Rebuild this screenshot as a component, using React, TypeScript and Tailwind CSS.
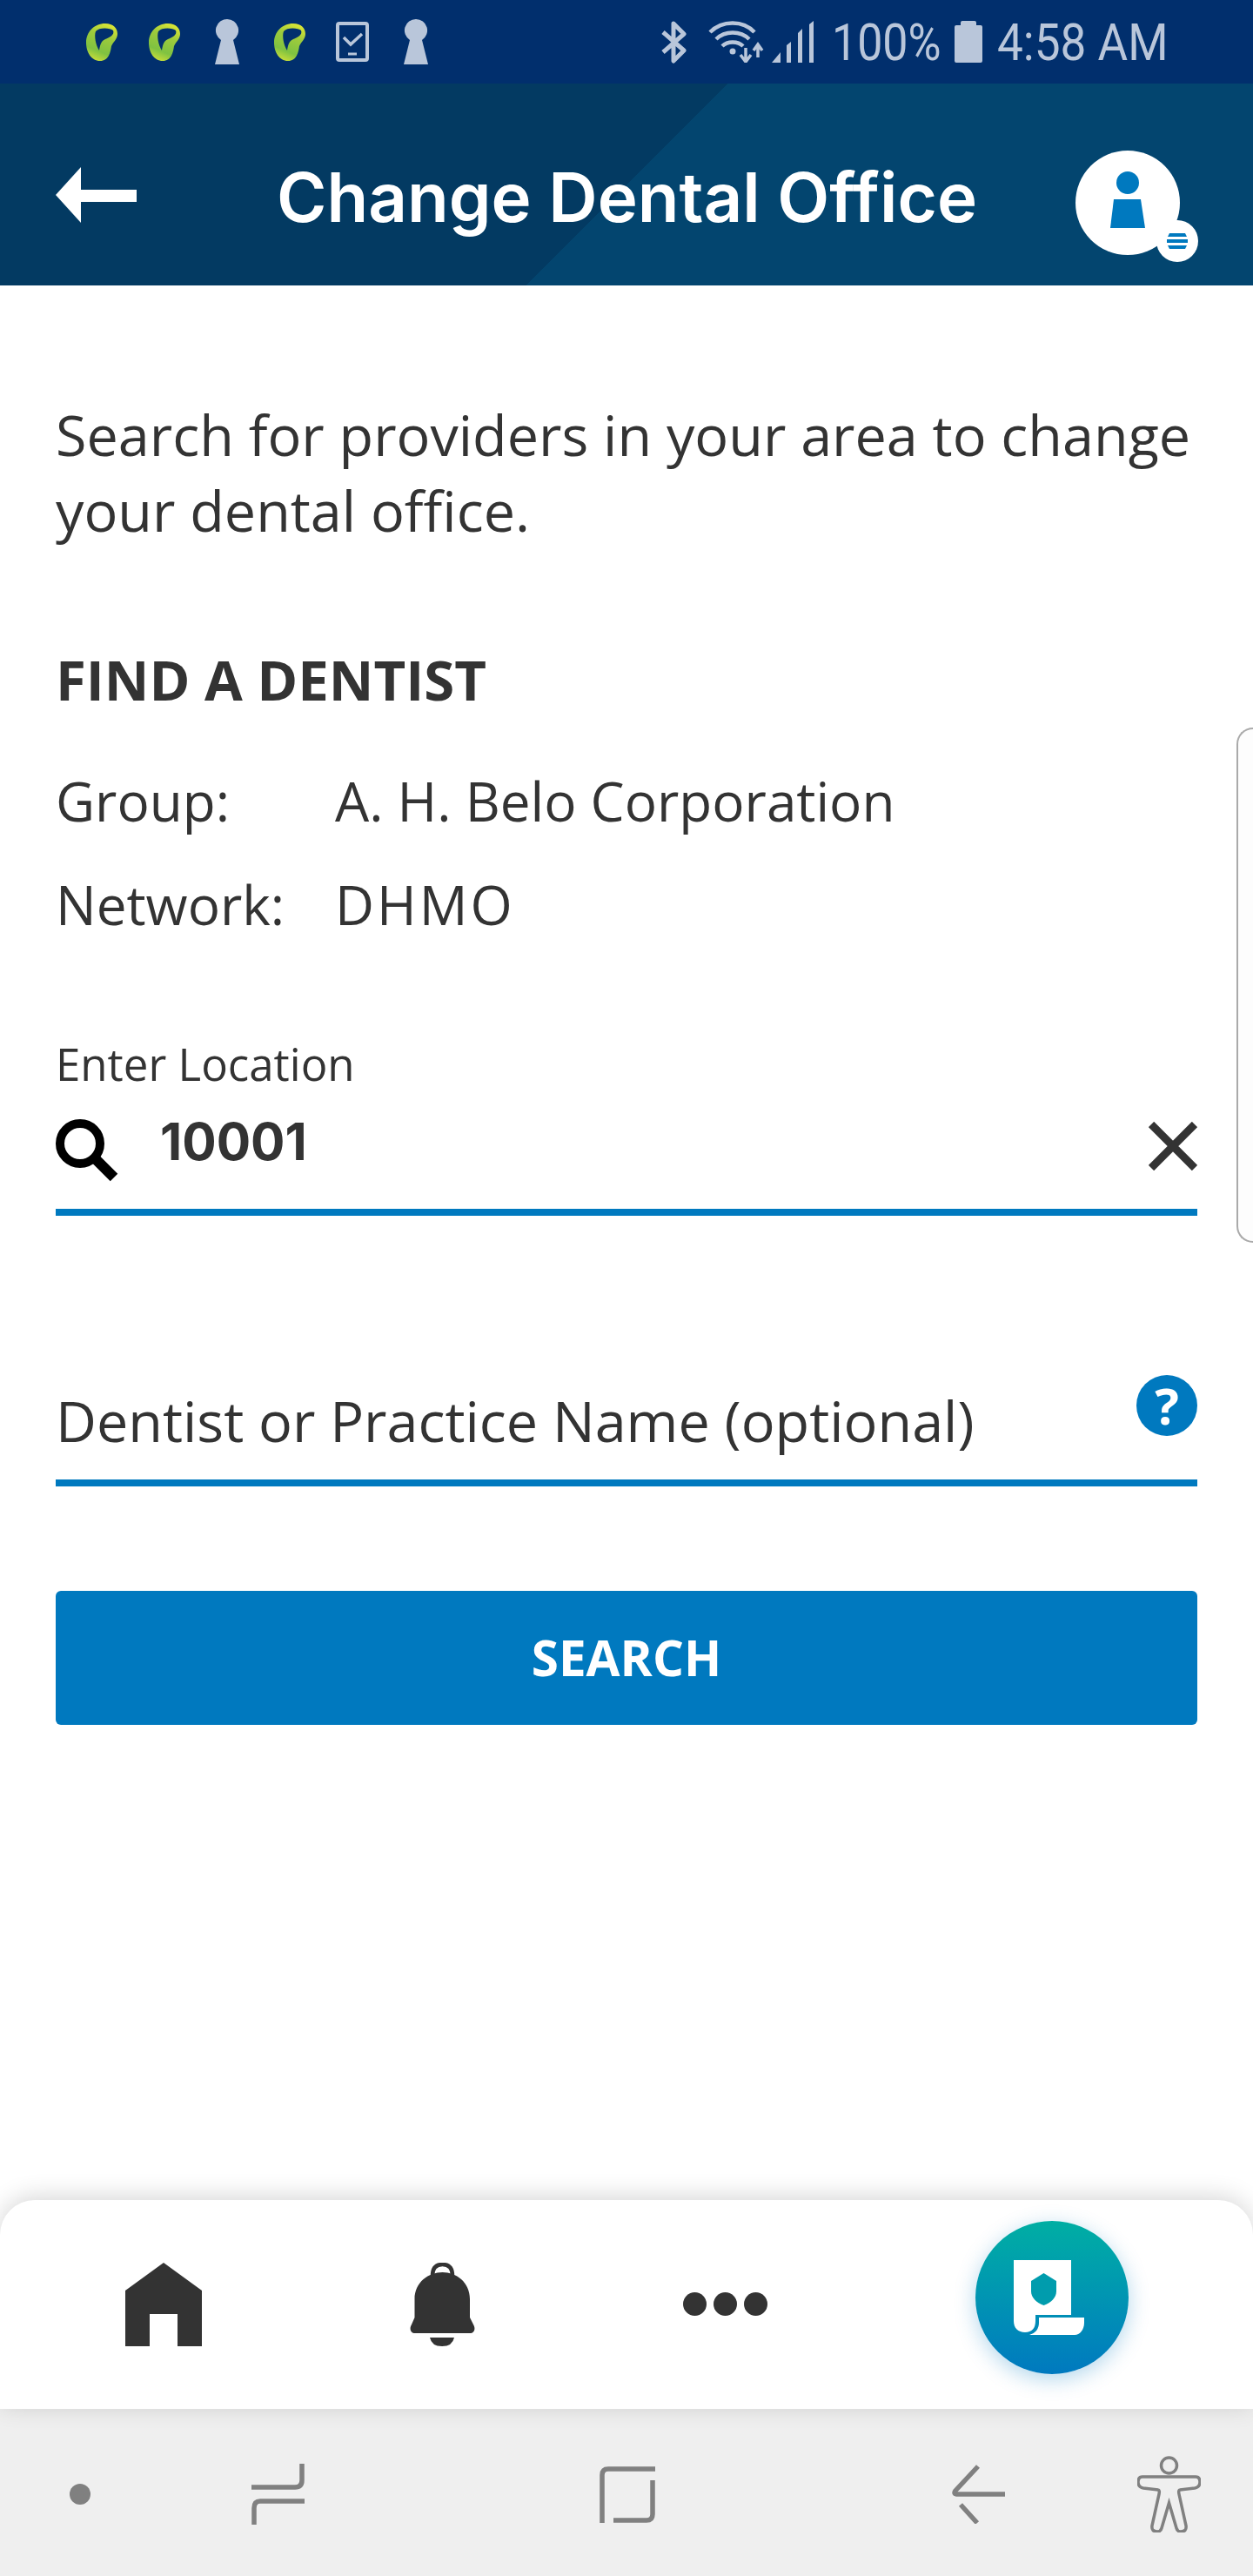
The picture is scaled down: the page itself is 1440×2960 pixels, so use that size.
import React from "react";

const OPEN = "font-['Open_Sans',sans-serif]";

function Leaf({ id }: { id: string }) {
  return (
    <svg width="36" height="43" viewBox="0 0 36 43" className="shrink-0">
      <defs>
        <linearGradient id={id} x1="0.7" y1="0" x2="0.35" y2="1">
          <stop offset="0" stopColor="#dbe635" />
          <stop offset="0.35" stopColor="#9ecb3c" />
          <stop offset="0.75" stopColor="#7fc241" />
          <stop offset="1" stopColor="#c5dc3a" />
        </linearGradient>
      </defs>
      <path
        fillRule="evenodd"
        fill={`url(#${id})`}
        d="M22 0C31 0 36 5 36 12C36 18 31 21 29 26C28 33 26 43 16 43C6 43 0 33 0 22C0 10 9 0 22 0ZM11 9C9 14 11 25 15 31C16 25 17 20 22 18C27 16 33 13 31 8C28 5 15 4 11 9Z"
      />
    </svg>
  );
}

function Keyhole() {
  return (
    <svg width="28" height="52" viewBox="0 0 28 52" className="mx-1 shrink-0">
      <path fill="#b9c6da" d="M14 0A13 13 0 0 1 21 24L28 52H0L7 24A13 13 0 0 1 14 0Z" />
    </svg>
  );
}

function Phone() {
  return (
    <svg width="38" height="46" viewBox="0 0 38 46" fill="none" className="shrink-0 -ml-px">
      <rect x="2" y="2" width="34" height="42" rx="2" stroke="#b9c6da" strokeWidth="4" />
      <path d="M9 18L17 26L30 14" stroke="#b9c6da" strokeWidth="3.5" />
      <path d="M14 37H24" stroke="#b9c6da" strokeWidth="3" />
    </svg>
  );
}

function StatusIcons() {
  return (
    <div className="flex items-center">
      <svg width="31" height="49" viewBox="0 0 31 49" fill="none" className="shrink-0">
        <path d="M3 13L27 34L15 46V3L27 15L3 36" stroke="#b9c6da" strokeWidth="5" strokeLinejoin="round" />
      </svg>
      <svg width="65" height="48" viewBox="0 0 65 48" fill="none" className="shrink-0 ml-6">
        <path d="M2 13C16 -1 40 -1 53 13" stroke="#b9c6da" strokeWidth="4.5" />
        <path d="M9 21C19 11 37 11 47 21" stroke="#b9c6da" strokeWidth="4.5" />
        <path d="M16 29C22 23 34 23 40 29" stroke="#b9c6da" strokeWidth="4.5" />
        <circle cx="28" cy="35" r="3.5" fill="#b9c6da" />
        <path d="M43 31V44M37 39L43 47L49 39" stroke="#b9c6da" strokeWidth="3.5" />
        <path d="M57 42V28M52 34L57 27L62 34" stroke="#b9c6da" strokeWidth="3.5" />
      </svg>
      <svg width="48" height="48" viewBox="0 0 48 48" className="shrink-0 ml-2">
        <path fill="#b9c6da" d="M0 48L10 36V48ZM17 28L22 24V48H17ZM30 14L35 9V48H30ZM43 4L48 0V48H43Z" />
      </svg>
      <span className="ml-[21px] mt-[2px] w-[123px] shrink-0 origin-left scale-x-[.865] font-['Roboto',sans-serif] text-[60px] leading-[72px] text-[#b9c6da] whitespace-nowrap">
        100%
      </span>
      <svg width="32" height="48" viewBox="0 0 32 48" className="shrink-0 ml-[18px]">
        <path fill="#b9c6da" d="M9 0H23Q25 0 25 2V5H30Q32 5 32 7V46Q32 48 30 48H2Q0 48 0 46V7Q0 5 2 5H7V2Q7 0 9 0Z" />
      </svg>
      <span className="ml-[17px] mt-[2px] w-[194px] shrink-0 origin-left scale-x-[.885] font-['Roboto',sans-serif] text-[60px] leading-[72px] text-[#b9c6da] whitespace-nowrap">
        4:58 AM
      </span>
    </div>
  );
}

function Avatar() {
  return (
    <div className="relative h-[120px] w-[120px] shrink-0 rounded-full bg-white">
      <svg width="46" height="70" viewBox="0 0 46 70" className="absolute left-[37px] top-[24px]">
        <ellipse cx="23" cy="13" rx="13" ry="13" fill="#0079bf" />
        <path fill="#0079bf" d="M7 32H38L43 65H3Z" />
      </svg>
      <div className="absolute left-[93px] top-[80px] flex h-[48px] w-[48px] items-center justify-center rounded-full bg-white">
        <svg width="24" height="18" viewBox="0 0 24 18">
          <path fill="#0079bf" d="M3 0H21L23 4H1ZM0 7H24V11H0ZM1 14H23L21 18H3Z" />
        </svg>
      </div>
    </div>
  );
}

export default function App() {
  return (
    <div className="relative flex h-[2960px] w-[1440px] flex-col overflow-hidden bg-white">
      {/* status bar */}
      <div className="flex h-24 shrink-0 items-center justify-between bg-[#012f6d] pl-[99px] pr-[100px]">
        <div className="flex items-center gap-9">
          <Leaf id="a" />
          <Leaf id="b" />
          <Keyhole />
          <Leaf id="c" />
          <Phone />
          <Keyhole />
        </div>
        <StatusIcons />
      </div>

      {/* header */}
      <div className="flex h-[232px] shrink-0 items-center bg-[linear-gradient(135deg,#033a62_50%,#03456f_50%)] pl-16 pr-[64px]">
        <svg width="93" height="64" viewBox="0 0 93 64" className="mt-[24px] shrink-0">
          <path fill="#fff" d="M29 0V26H93V40H29V64L0 32Z" />
        </svg>
        <h1 className="ml-[161px] mt-[30px] w-[800px] shrink-0 whitespace-nowrap font-['Inter',sans-serif] text-[78px] font-semibold leading-[88px] text-white">
          Change Dental Office
        </h1>
        <div className="ml-[118px] mt-[42px]">
          <Avatar />
        </div>
      </div>

      {/* content */}
      <main className={`flex flex-1 flex-col px-16 pt-[128px] text-[#333] ${OPEN}`}>
        <p className="text-[64.7px] leading-[87px]">
          Search for providers in your area to change
          <br />
          your dental office.
        </p>
        <h2 className="mt-[111px] text-[63.5px] font-bold leading-[80px]">FIND A DENTIST</h2>
        <div className="mt-10 text-[62px] leading-[119px]">
          <div className="flex">
            <span className="w-[321px]">Group:</span>
            <span>A. H. Belo Corporation</span>
          </div>
          <div className="flex">
            <span className="w-[321px]">Network:</span>
            <span className="tracking-[3px]">DHMO</span>
          </div>
        </div>

        <label className="mt-[93px] text-[51px] leading-[60px]">Enter Location</label>
        <div className="flex h-[145px] items-start border-b-[8px] border-[#0079bf]">
          <svg width="72" height="72" viewBox="0 0 72 72" fill="none" className="mt-[34px] shrink-0">
            <circle cx="28" cy="28" r="23" stroke="#000" strokeWidth="10" />
            <path d="M45 45L67 67" stroke="#000" strokeWidth="12" />
          </svg>
          <span className="ml-[48px] mt-[25px] font-['Inter',sans-serif] text-[58.5px] font-bold leading-[70px]">10001</span>
          <svg width="56" height="56" viewBox="0 0 56 56" fill="none" className="ml-auto mt-[37px] shrink-0">
            <path d="M3 3L53 53M53 3L3 53" stroke="#333" strokeWidth="9" />
          </svg>
        </div>

        <div className="mt-[142px] flex h-[169px] items-start justify-between border-b-[8px] border-[#0079bf]">
          <span className="mt-[53px] text-[64.7px] leading-[80px]">Dentist or Practice Name (optional)</span>
          <div className="mt-[41px] flex h-[70px] w-[70px] shrink-0 items-center justify-center rounded-full bg-[#0079bf] text-[58px] font-bold leading-none text-white">
            ?
          </div>
        </div>

        <button className="mt-[120px] h-[154px] w-full rounded-md bg-[#0079bf] text-[56.5px] font-bold text-white">
          SEARCH
        </button>
      </main>

      {/* side handle */}
      <div className="absolute right-0 top-[836px] h-[592px] w-[19px] rounded-l-[20px] border-y-2 border-l-2 border-[#aaa] bg-[#fdfdfd]" />

      {/* tab bar */}
      <div className="relative flex h-[240px] shrink-0 items-start gap-[239px] rounded-t-[40px] bg-white pl-[144px] shadow-[0_-4px_28px_rgba(0,0,0,0.16)]">
        <svg width="88" height="96" viewBox="0 0 88 96" className="mt-[72px] shrink-0">
          <path fill="#333" d="M44 0L88 32V96H60V59H28V96H0V32Z" />
        </svg>
        <svg width="75" height="96" viewBox="0 0 75 96" fill="none" className="mt-[72px] shrink-0">
          <path d="M26 15C26 5 31 2 37.5 2C44 2 49 5 49 15" stroke="#333" strokeWidth="4.5" />
          <path
            fill="#333"
            d="M37.5 11C53 11 69 22 69 42V63L73 71C76 76 74 81 69 81H6C1 81 -1 76 2 71L5.5 63V42C5.5 22 22 11 37.5 11Z"
          />
          <path fill="#333" d="M23 86H51Q49 96 37 96Q25 96 23 86Z" />
        </svg>
        <div className="mt-[106px] flex shrink-0 gap-[8px]">
          <div className="h-[27px] w-[27px] rounded-full bg-[#333]" />
          <div className="h-[27px] w-[27px] rounded-full bg-[#333]" />
          <div className="h-[27px] w-[27px] rounded-full bg-[#333]" />
        </div>
        <div className="mt-[24px] flex h-[176px] w-[176px] shrink-0 items-center justify-center rounded-full bg-gradient-to-b from-[#00aea3] to-[#0079bf] shadow-[0_6px_24px_rgba(0,121,191,0.3)]">
          <svg width="81" height="86" viewBox="0 0 81 86" className="-ml-[7px]">
            <path fill="#fff" d="M0 0H66V63H25V70C25 78 21 83 13 83C5 83 0 78 0 70Z" />
            <path fill="#fff" d="M29 66H81V72C81 80 76 86 70 86H18C25 84 29 79 29 72Z" />
            <path fill="#009cad" d="M34.5 15L49 24V36C49 43 43 49 34.5 52C26 49 20 43 20 36V24Z" />
          </svg>
        </div>
      </div>

      {/* android navigation */}
      <div className="flex h-[192px] shrink-0 items-center bg-[#efefef] pt-[4px]">
        <div className="ml-20 h-6 w-6 shrink-0 rounded-full bg-[#808080]" />
        <svg width="61" height="70" viewBox="0 0 61 70" fill="none" className="ml-[185px] shrink-0">
          <path d="M0 27H50Q58 27 58 19V0M61 43H10Q3 43 3 51V70" stroke="#808080" strokeWidth="5.5" />
        </svg>
        <svg width="64" height="65" viewBox="0 0 64 65" fill="none" className="ml-[339px] shrink-0">
          <path d="M3 65V10Q3 3 10 3H64M61 16V55Q61 62 54 62H16" stroke="#808080" strokeWidth="5.5" />
        </svg>
        <svg width="61" height="68" viewBox="0 0 61 68" fill="none" className="ml-[341px] shrink-0">
          <path d="M30 2L4 30Q1 34 7 34H61M10 46L29 67" stroke="#808080" strokeWidth="5.5" />
        </svg>
        <svg width="73" height="88" viewBox="0 0 73 88" fill="none" className="ml-[152px] shrink-0">
          <circle cx="36.5" cy="11" r="9" stroke="#808080" strokeWidth="3.5" />
          <path
            d="M6 24H67Q72 24 72 30Q72 36 66 37L49 39Q47 39 48 44L56 80Q57 87 50 87Q46 87 45 83L36.5 54L28 83Q27 87 23 87Q16 87 17 80L25 44Q26 39 24 39L7 37Q1 36 1 30Q1 24 6 24Z"
            stroke="#808080"
            strokeWidth="3.5"
          />
        </svg>
      </div>
    </div>
  );
}
